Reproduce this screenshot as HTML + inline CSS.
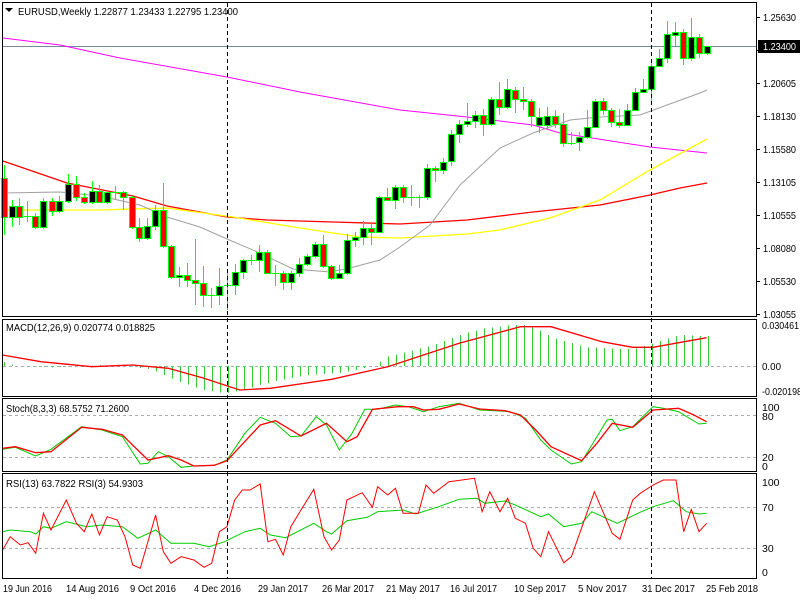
<!DOCTYPE html>
<html><head><meta charset="utf-8">
<style>
html,body{margin:0;padding:0;background:#fff;width:800px;height:600px;overflow:hidden}
#c{position:absolute;left:0;top:0}
.t{font-family:"Liberation Sans",sans-serif;font-size:10.5px;fill:#000}
</style></head>
<body>
<svg id="c" width="800" height="600" xmlns="http://www.w3.org/2000/svg">
<g id="g"></g>
<g fill="none" stroke="#000" stroke-width="1" shape-rendering="crispEdges">
<rect x="2.5" y="2.5" width="754" height="314"/>
<rect x="2.5" y="319.5" width="754" height="77"/>
<rect x="2.5" y="398.5" width="754" height="73"/>
<rect x="2.5" y="473.5" width="754" height="105"/>
</g>
<rect x="758" y="40" width="42" height="13" fill="#000"/>
<g class="t" lengthAdjust="spacingAndGlyphs">
<path d="M5 8h8l-4 4z" fill="#000"/>
<text x="18" y="15" textLength="220" lengthAdjust="spacingAndGlyphs">EURUSD,Weekly  1.22877 1.23433 1.22795 1.23400</text>
<text x="763" y="21" textLength="33" lengthAdjust="spacingAndGlyphs">1.25630</text>
<text x="763" y="87" textLength="33" lengthAdjust="spacingAndGlyphs">1.20605</text>
<text x="763" y="120" textLength="33" lengthAdjust="spacingAndGlyphs">1.18130</text>
<text x="763" y="153" textLength="33" lengthAdjust="spacingAndGlyphs">1.15580</text>
<text x="763" y="186" textLength="33" lengthAdjust="spacingAndGlyphs">1.13105</text>
<text x="763" y="219" textLength="33" lengthAdjust="spacingAndGlyphs">1.10555</text>
<text x="763" y="252" textLength="33" lengthAdjust="spacingAndGlyphs">1.08080</text>
<text x="763" y="285" textLength="33" lengthAdjust="spacingAndGlyphs">1.05530</text>
<text x="763" y="318" textLength="33" lengthAdjust="spacingAndGlyphs">1.03055</text>
<text x="763" y="50" fill="#fff" textLength="33" lengthAdjust="spacingAndGlyphs">1.23400</text>
<text x="6" y="331" textLength="149" lengthAdjust="spacingAndGlyphs">MACD(12,26,9) 0.020774 0.018825</text>
<text x="762" y="329" textLength="37" lengthAdjust="spacingAndGlyphs">0.030461</text>
<text x="762" y="370" textLength="19" lengthAdjust="spacingAndGlyphs">0.00</text>
<text x="762" y="395" textLength="40" lengthAdjust="spacingAndGlyphs">-0.020198</text>
<text x="6" y="412" textLength="123" lengthAdjust="spacingAndGlyphs">Stoch(8,3,3) 68.5752 71.2600</text>
<text x="762" y="411">100</text>
<text x="762" y="420">80</text>
<text x="762" y="461">20</text>
<text x="762" y="470">0</text>
<text x="6" y="487" textLength="137" lengthAdjust="spacingAndGlyphs">RSI(13) 63.7822  RSI(3) 54.9303</text>
<text x="762" y="486">100</text>
<text x="762" y="511">70</text>
<text x="762" y="552">30</text>
<text x="762" y="576">0</text>
<text x="3" y="592" textLength="49" lengthAdjust="spacingAndGlyphs">19 Jun 2016</text>
<text x="66" y="592" textLength="53" lengthAdjust="spacingAndGlyphs">14 Aug 2016</text>
<text x="130" y="592" textLength="46" lengthAdjust="spacingAndGlyphs">9 Oct 2016</text>
<text x="194" y="592" textLength="47" lengthAdjust="spacingAndGlyphs">4 Dec 2016</text>
<text x="258" y="592" textLength="50" lengthAdjust="spacingAndGlyphs">29 Jan 2017</text>
<text x="322" y="592" textLength="52" lengthAdjust="spacingAndGlyphs">26 Mar 2017</text>
<text x="386" y="592" textLength="54" lengthAdjust="spacingAndGlyphs">21 May 2017</text>
<text x="450" y="592" textLength="47" lengthAdjust="spacingAndGlyphs">16 Jul 2017</text>
<text x="514" y="592" textLength="52" lengthAdjust="spacingAndGlyphs">10 Sep 2017</text>
<text x="578" y="592" textLength="49" lengthAdjust="spacingAndGlyphs">5 Nov 2017</text>
<text x="642" y="592" textLength="53" lengthAdjust="spacingAndGlyphs">31 Dec 2017</text>
<text x="706" y="592" textLength="52" lengthAdjust="spacingAndGlyphs">25 Feb 2018</text>
</g>
</svg>
<script>
var g=document.getElementById('g'),s='';
function L(x1,y1,x2,y2,c,w,d){s+='<line x1="'+x1+'" y1="'+y1+'" x2="'+x2+'" y2="'+y2+'" stroke="'+c+'" stroke-width="'+(w||1)+'"'+(d?' stroke-dasharray="'+d+'"':'')+' shape-rendering="crispEdges"/>';}
function P(pts,c,w,sx){var d=pts.map(function(p,i){return (i?'L':'M')+(sx?p[0]/1.96:p[0]).toFixed(1)+' '+(sx?p[1]/3+310:p[1]).toFixed(1)}).join('');s+='<path d="'+d+'" fill="none" stroke="'+c+'" stroke-width="'+(w||1)+'"/>';}
L(3,366.5,757,366.5,'#aaa',1,'3,3');
L(3,415.5,757,415.5,'#aaa',1,'3,3');L(3,457.5,757,457.5,'#aaa',1,'3,3');
L(3,507.5,757,507.5,'#aaa',1,'3,3');L(3,548.5,757,548.5,'#aaa',1,'3,3');
L(3,46.5,757,46.5,'#778899');
P([[3,38],[60,45],[120,58],[227,77],[300,92],[400,110],[467,117],[533,125],[560,133],[650,147],[707,153]],'#ff00ff',1);
P([[3,161],[67,183],[133,196],[167,206],[227,217],[267,220],[333,222],[400,224],[467,220],[533,212],[600,205],[650,195],[680,188],[707,183]],'#ff0000',1.3);
P([[3,210],[100,210],[167,208],[233,217],[300,228],[360,237],[400,238],[467,234],[500,230],[550,218],[600,200],[650,170],[707,139]],'#ffff00',1.3);
P([[3,193],[60,192],[100,196],[140,205],[167,217],[200,227],[227,239],[260,253],[293,269],[330,272],[350,268],[380,260],[400,247],[430,225],[460,185],[500,148],[533,133],[570,120],[600,117],[640,115],[667,105],[700,93],[707,90]],'#a0a0a0',1);
var C=[[4,178,217,165,235],[12,217,206,200,227],[19,206,217,198,225],[27,216,216,201,222],[35,216,227,213,229],[43,227,201,198,229],[52,201,211,198,216],[59,211,201,196,213],[68,201,184,174,203],[76,184,197,176,201],[84,197,202,193,204],[92,202,191,181,204],[99,191,202,185,203],[107,202,192,190,204],[115,192,192,186,200],[123,192,197,191,210],[132,197,227,196,229],[139,227,238,218,242],[147,238,226,218,240],[155,226,210,205,230],[163,210,246,183,248],[171,246,277,245,279],[179,277,275,267,287],[187,275,280,263,287],[195,280,283,239,305],[203,283,295,266,307],[211,295,295,288,308],[219,295,286,268,305],[227,285,285,272,310],[235,285,272,264,295],[243,272,260,259,279],[251,260,260,255,265],[259,260,252,245,272],[267,252,273,250,274],[275,273,273,265,286],[283,273,282,271,290],[291,282,273,271,290],[299,273,264,258,277],[307,264,256,254,266],[315,256,244,242,258],[323,244,266,235,268],[331,266,278,265,280],[339,278,273,265,279],[347,273,240,234,275],[355,240,237,232,247],[363,237,228,221,245],[371,228,232,222,245],[379,232,197,196,233],[387,197,200,188,201],[395,200,187,185,209],[403,187,197,185,203],[411,197,197,185,206],[419,197,197,195,208],[427,197,168,164,200],[435,168,170,166,182],[443,170,162,158,174],[451,161,134,130,166],[459,134,124,120,143],[467,124,121,103,127],[475,121,115,111,128],[483,115,124,109,136],[491,124,99,97,126],[499,99,107,82,115],[507,107,89,79,109],[515,90,99,87,113],[523,99,101,87,110],[531,101,116,99,127],[539,125,117,108,133],[547,125,116,107,130],[555,116,124,110,128],[563,124,143,113,147],[571,143,143,132,145],[579,142,137,132,151],[587,137,127,110,139],[595,127,101,99,128],[603,101,110,98,115],[611,110,122,108,127],[619,122,125,109,128],[627,125,110,104,126],[635,110,92,88,110],[643,92,89,79,92],[651,89,66,62,103],[659,66,58,49,66],[667,58,34,21,63],[675,35,32,22,47],[683,32,58,29,65],[691,58,37,18,61],[699,37,53,34,58],[707,53,46,46,55]];
C.forEach(function(k){var x=k[0],o=k[1],c=k[2],h=k[3],l=k[4];L(x+.5,h,x+.5,l,'#00ff00');var t=Math.min(o,c),b=Math.max(o,c);
if(b-t<1){L(x-3,t+.5,x+4,t+.5,'#00ff00');}else{s+='<rect x="'+(x-2.5)+'" y="'+(t+.5)+'" width="6" height="'+(b-t)+'" fill="'+(c<o?'#000':'#f00')+'" stroke="#00ff00" stroke-width="1" shape-rendering="crispEdges"/>';}});
var H=[[5,155],[30,167],[100,172],[200,165],[260,170],[300,180],[350,215],[400,240],[445,250],[480,240],[520,220],[600,195],[660,190],[700,180],[730,168],[760,140],[800,125],[860,100],[900,75],[950,55],[1000,45],[1040,45],[1080,80],[1110,95],[1150,112],[1240,118],[1280,100],[1330,75],[1385,78]];
function interp(A,x){for(var i=0;i<A.length-1;i++){var a=A[i][0]/1.96,b=A[i+1][0]/1.96;if(x>=a&&x<=b){return A[i][1]+(A[i+1][1]-A[i][1])*(x-a)/(b-a);}}return A[A.length-1][1];}
for(var x=4;x<=708;x+=8){var v=interp(H,x)/3+310;L(x+.5,366,x+.5,v,'#33cc33');}
P([[5,135],[80,155],[180,170],[260,165],[330,175],[400,205],[470,240],[530,235],[650,208],[760,170],[900,100],[1020,50],[1080,50],[1180,95],[1240,112],[1280,112],[1385,83]],'#ff0000',1.3,1);
P([[5,418],[30,412],[70,438],[100,418],[160,350],[200,360],[240,380],[275,462],[290,460],[310,425],[330,440],[355,472],[380,468],[420,466],[445,450],[480,370],[510,322],[540,340],[570,380],[590,378],[620,320],[640,345],[665,420],[690,370],[715,298],[740,298],[775,285],[800,290],[830,305],[860,290],[900,280],[940,300],[980,303],[1000,305],[1030,325],[1060,390],[1080,420],[1120,462],[1140,455],[1170,380],[1190,330],[1200,328],[1215,362],[1240,350],[1280,290],[1300,295],[1330,305],[1370,342],[1385,340]],'#00cc00',1,1);
P([[5,415],[30,410],[70,428],[100,425],[160,352],[200,358],[240,375],[290,450],[330,437],[355,450],[380,468],[420,466],[445,452],[510,345],[540,332],[590,378],[640,340],[680,395],[700,380],[730,298],[780,290],[810,290],[830,300],[860,298],[900,282],[940,297],[990,302],[1020,315],[1050,360],[1080,410],[1140,452],[1170,400],[1200,340],[1240,352],[1280,300],[1330,295],[1360,315],[1385,335]],'#ff0000',1.3,1);
P([[5,665],[20,660],[60,665],[70,672],[85,650],[100,655],[130,635],[170,650],[200,645],[240,650],[270,685],[305,660],[335,700],[380,700],[410,710],[440,695],[480,665],[510,655],[530,675],[560,683],[615,640],[640,665],[650,672],[680,632],[720,622],[740,605],[790,600],[815,612],[860,590],[900,568],[935,565],[950,580],[990,573],[1010,585],[1060,620],[1075,612],[1105,650],[1140,640],[1160,605],[1210,640],[1250,610],[1280,590],[1320,572],[1345,605],[1370,612],[1385,610]],'#00cc00',1,1);
P([[5,720],[20,680],[40,705],[55,698],[70,730],[85,610],[100,660],[130,570],[150,640],[165,665],[180,612],[195,675],[210,620],[230,630],[245,680],[260,765],[275,775],[305,615],[320,725],[335,760],[355,740],[380,750],[400,772],[415,760],[430,665],[445,650],[460,570],[475,540],[490,540],[510,522],[525,695],[540,688],[555,735],[570,650],[590,600],[615,538],[635,680],[650,720],[665,690],[680,570],[710,548],[730,592],[740,530],[760,555],[775,535],[790,610],[820,610],[835,525],[850,550],[880,515],[930,505],[945,605],[960,545],[980,605],[995,565],[1010,625],[1030,640],[1045,715],[1060,740],[1075,665],[1105,758],[1120,740],[1165,545],[1200,670],[1215,688],[1240,570],[1255,550],[1280,525],[1300,510],[1325,510],[1340,665],[1355,598],[1370,665],[1385,640]],'#ff0000',1,1);
L(227.5,3,227.5,579,'#000',1,'4,3');L(651.5,3,651.5,579,'#000',1,'4,3');
[17,50,83,116,149,182,215,248,281,314].forEach(function(y){L(757,y+.5,760,y+.5,'#000');});
g.innerHTML=s;
</script>
</body></html>
